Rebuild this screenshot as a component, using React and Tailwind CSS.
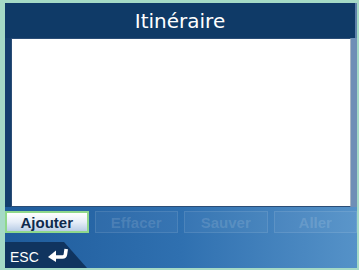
import React from "react";

function ReturnArrow() {
  return (
    <svg width="20" height="14" viewBox="0 0 20 14" className="block">
      <polygon points="0,9 8,2.5 8,14" fill="#ffffff" />
      <path d="M6 9 H14.5 Q17 9 17.4 6.5 L18.2 1" stroke="#ffffff" strokeWidth="3.6" fill="none" strokeLinejoin="round" />
    </svg>
  );
}

function Btn({ label, active }) {
  if (active) {
    return (
      <div className="h-[22px] flex items-center justify-center border-2 border-[#8fd88c] bg-gradient-to-b from-[#ffffff] via-[#e6eef8] to-[#b9cde6]">
        <span className="text-[15px] font-bold text-[#0e2a4c] leading-none" style={{ fontFamily: '"Liberation Sans", Arial, sans-serif' }}>
          {label}
        </span>
      </div>
    );
  }
  return (
    <div className="h-[22px] flex items-center justify-center border border-[#ffffff1a] bg-[#ffffff0a]">
      <span className="text-[15px] font-bold text-[#ffffff22] leading-none" style={{ fontFamily: '"Liberation Sans", Arial, sans-serif' }}>
        {label}
      </span>
    </div>
  );
}

export default function App() {
  return (
    <div className="w-[359px] h-[270px] bg-[#a5dac6] pt-[3px] pl-[5px] pr-[2px] pb-[2px] overflow-hidden">
      <div className="w-full h-full flex flex-col">
        {/* Title bar */}
        <div className="h-[35px] bg-[#0f3a67] flex items-center justify-center border-r-2 border-[#5f82aa]">
          <span className="text-[20px] text-white leading-none pt-[1px]" style={{ fontFamily: '"DejaVu Sans", Verdana, sans-serif' }}>
            Itinéraire
          </span>
        </div>
        {/* Middle */}
        <div className="h-[169px] flex">
          <div className="w-[6px] bg-[#143e6c]" />
          <div className="flex-1 bg-white border border-[#2b4d76] border-r-[#a9b6c4]" />
          <div className="w-[6px] bg-[#6e8fb6]" />
        </div>
        {/* Lower area */}
        <div className="flex-1 flex flex-col bg-gradient-to-r from-[#1f5c9c] via-[#2f70b0] to-[#5592c8]">
          <div className="pt-[4px] grid grid-cols-4 gap-[6px]">
            <Btn label="Ajouter" active />
            <Btn label="Effacer" />
            <Btn label="Sauver" />
            <Btn label="Aller" />
          </div>
          <div className="mt-auto h-[26px] flex">
            <div className="w-[82px] h-full bg-[#10345f] [clip-path:polygon(0_0,59px_0,82px_100%,0_100%)] flex items-center pl-[5px] gap-[9px]">
              <span className="text-[14px] text-white leading-none pt-[3px]" style={{ fontFamily: '"Liberation Sans", Arial, sans-serif' }}>
                ESC
              </span>
              <ReturnArrow />
            </div>
          </div>
        </div>
      </div>
    </div>
  );
}
